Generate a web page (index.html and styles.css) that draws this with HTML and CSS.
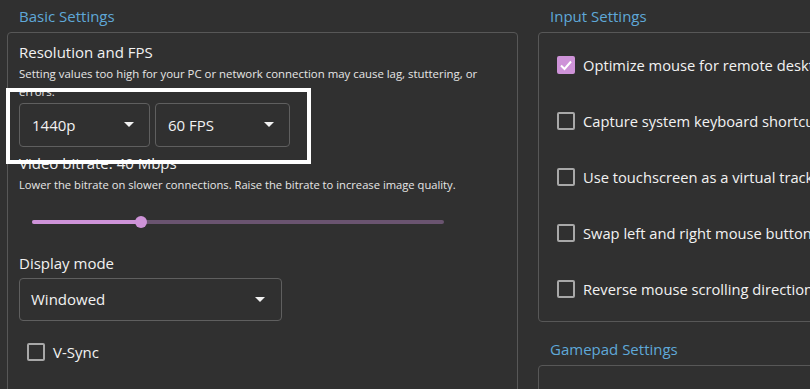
FILE: index.html
```html
<!DOCTYPE html>
<html lang="en">
<head>
<meta charset="utf-8">
<title>Settings</title>
<link rel="stylesheet" href="styles.css">
</head>
<body>
<div class="page">
  <section class="col col-left">
    <h2 class="section-title">Basic Settings</h2>
    <div class="group group-basic">
      <div class="field-title title-res">Resolution and FPS</div>
      <p class="hint hint-res">Setting values too high for your PC or network connection may cause lag, stuttering, or errors.</p>
      <div class="combo-row">
        <div class="combo combo-res"><span class="combo-text">1440p</span><svg class="caret" width="10" height="5" viewBox="0 0 10 5"><polygon points="0,0 10,0 5,5"/></svg></div>
        <div class="combo combo-fps"><span class="combo-text">60 FPS</span><svg class="caret" width="10" height="5" viewBox="0 0 10 5"><polygon points="0,0 10,0 5,5"/></svg></div>
      </div>
      <div class="field-title title-bitrate">Video bitrate: 40 Mbps</div>
      <p class="hint hint-bitrate">Lower the bitrate on slower connections. Raise the bitrate to increase image quality.</p>
      <div class="slider">
        <div class="slider-track"></div>
        <div class="slider-fill" style="width: 26.4%"></div>
        <div class="slider-handle" style="left: 26.4%"></div>
      </div>
      <div class="field-title title-display">Display mode</div>
      <div class="combo combo-wide"><span class="combo-text">Windowed</span><svg class="caret" width="10" height="5" viewBox="0 0 10 5"><polygon points="0,0 10,0 5,5"/></svg></div>
      <div class="check check-vsync"><span class="box"></span><span class="check-label">V-Sync</span></div>
    </div>
  </section>
  <section class="col col-right">
    <h2 class="section-title">Input Settings</h2>
    <div class="group group-input">
      <div class="check-row"><span class="box box-checked"><svg width="18" height="18" viewBox="0 0 18 18"><polyline points="4,9.5 7.5,13 14,5.5"/></svg></span><span class="check-label">Optimize mouse for remote desktop instead of games</span></div>
      <div class="check-row"><span class="box"></span><span class="check-label">Capture system keyboard shortcuts</span></div>
      <div class="check-row"><span class="box"></span><span class="check-label">Use touchscreen as a virtual trackpad</span></div>
      <div class="check-row"><span class="box"></span><span class="check-label">Swap left and right mouse buttons</span></div>
      <div class="check-row"><span class="box"></span><span class="check-label">Reverse mouse scrolling direction</span></div>
    </div>
    <h2 class="section-title section-title-gamepad">Gamepad Settings</h2>
    <div class="group group-gamepad"></div>
  </section>
  <div class="highlight"></div>
</div>
</body>
</html>
```
FILE: styles.css
```css
* { box-sizing: border-box; }

html, body {
  margin: 0;
  padding: 0;
  background: #303030;
  overflow: hidden;
}

body {
  width: 810px;
  height: 389px;
  font-family: "Open Sans", "Noto Sans", sans-serif;
  color: #f2f2f2;
}

.page {
  position: relative;
  display: flex;
  width: 810px;
  height: 389px;
  overflow: hidden;
}

.col-left {
  flex: 0 0 auto;
  width: 511px;
  margin-left: 7px;
}

.col-right {
  flex: 0 0 auto;
  width: 320px;
  margin-left: 20px;
}

.section-title {
  margin: 0;
  height: 32px;
  padding: 6px 0 0 12px;
  font-size: 15px;
  line-height: 20px;
  font-weight: 400;
  color: #5fa8d8;
  white-space: nowrap;
}

.section-title-gamepad {
  height: 43px;
  padding-top: 17px;
}

.group {
  border: 1px solid #575757;
  border-radius: 4px;
}

.group-basic {
  height: 420px;
  padding: 9px 11px 0 11px;
}

.field-title {
  font-size: 15px;
  line-height: 20px;
  white-space: nowrap;
}

.hint {
  margin: 0;
  font-size: 11.2px;
  line-height: 18.5px;
  color: #e6e6e6;
}

.hint-res {
  margin-top: 2.5px;
  width: 470px;
  font-size: 11.4px;
}

.combo-row {
  display: flex;
  gap: 5px;
  margin-top: 1.3px;
}

.combo {
  display: flex;
  align-items: center;
  justify-content: space-between;
  height: 44px;
  border: 1px solid #5f5f5f;
  border-radius: 4px;
  padding: 0 15px 0 12px;
  font-size: 15px;
}

.combo-res { width: 131px; }
.combo-fps { width: 135px; padding-left: 12px; }

.combo-wide {
  width: 263px;
  height: 43px;
  margin-top: 4.8px;
  padding-left: 11px;
  padding-right: 16px;
}

.caret polygon { fill: #f2f2f2; }

.title-bitrate { margin-top: 6.2px; }

.hint-bitrate { margin-top: 3.3px; }

.slider {
  position: relative;
  width: 412px;
  height: 24px;
  margin: 15.5px 0 0 13px;
}

.slider-track,
.slider-fill {
  position: absolute;
  left: 0;
  top: 10px;
  height: 4px;
  border-radius: 2px;
}

.slider-track {
  width: 100%;
  background: #6a5470;
}

.slider-fill {
  background: #ce93d8;
}

.slider-handle {
  position: absolute;
  top: 6px;
  width: 12px;
  height: 12px;
  margin-left: -6px;
  border-radius: 50%;
  background: #ce93d8;
}

.title-display { margin-top: 18.5px; }

.check {
  display: flex;
  align-items: center;
  height: 24px;
  margin-top: 19px;
  padding-left: 8px;
}

.box {
  flex: 0 0 auto;
  display: block;
  width: 18px;
  height: 18px;
  border: 2px solid #a8a8a8;
  border-radius: 2px;
}

.check-label {
  margin-left: 8px;
  font-size: 15px;
  line-height: 20px;
  white-space: nowrap;
}

.group-input {
  width: 320px;
  padding: 4px 0 4px 18px;
}

.check-row {
  display: flex;
  align-items: center;
  height: 56px;
}

.check-row .check-label {
  margin-left: 8px;
  font-size: 14.7px;
}

.box-checked {
  position: relative;
  border-color: #ce93d8;
  background: #ce93d8;
}

.box-checked svg {
  position: absolute;
  left: -2px;
  top: -2px;
}

.box-checked polyline {
  fill: none;
  stroke: #ffffff;
  stroke-width: 2;
}

.group-gamepad {
  width: 320px;
  height: 60px;
}

.highlight {
  position: absolute;
  left: 6px;
  top: 88px;
  width: 305px;
  height: 76px;
  border: 4px solid #ffffff;
}
```
